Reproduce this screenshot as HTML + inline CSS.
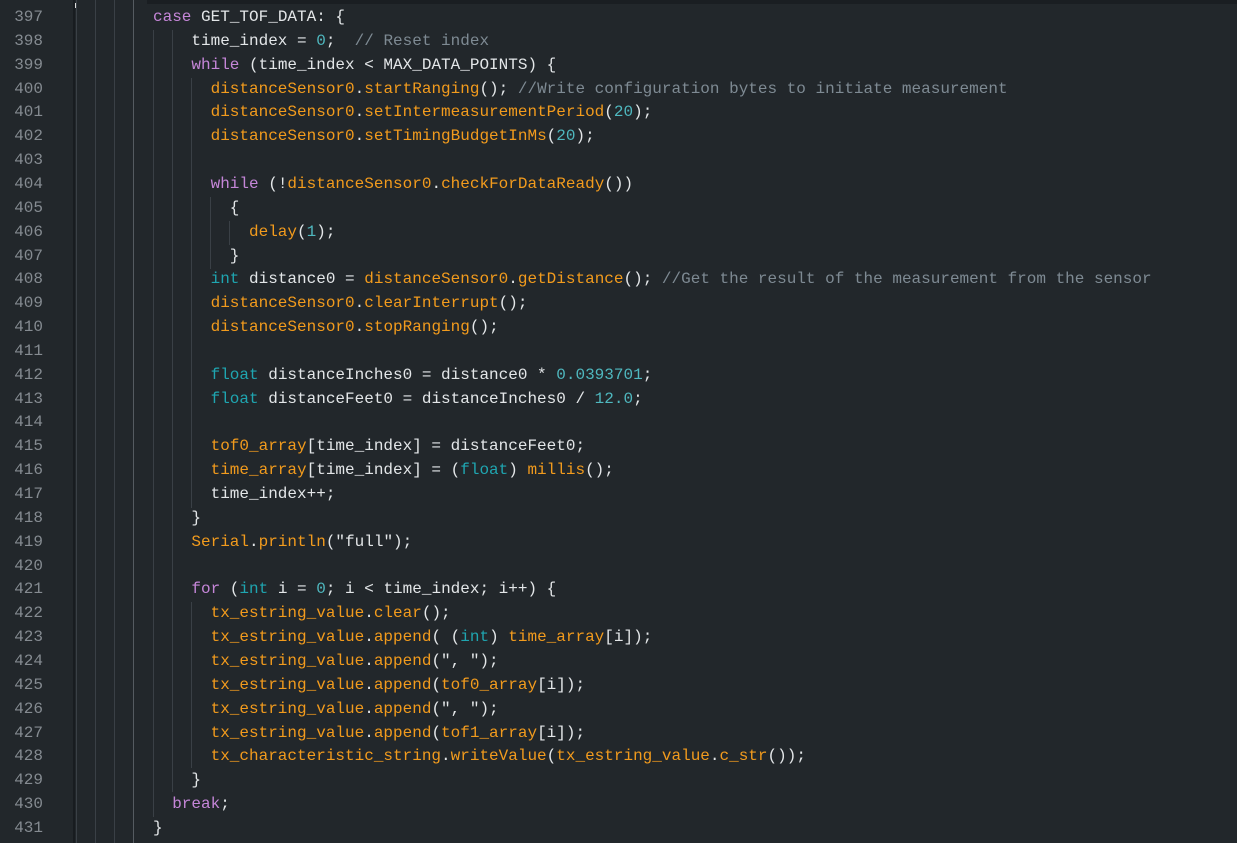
<!DOCTYPE html>
<html><head><meta charset="utf-8"><style>
body{margin:0;width:1237px;height:843px;background:#22272b;overflow:hidden;position:relative;font-family:"Liberation Mono",monospace;font-size:16px;}
.ln{position:absolute;left:0;width:43px;text-align:right;color:#858b91;height:23.85px;line-height:23.85px;}
.c{position:absolute;left:153px;color:#e3e6e8;white-space:pre;height:23.85px;line-height:23.85px;}
.g{position:absolute;width:1px;background:#3a4046;}
.k{color:#c586d8}.f{color:#f29b1d}.n{color:#4fb8bf}.t{color:#1fa5b0}.m{color:#7e8a93}
</style></head><body>
<div style="position:absolute;left:147px;top:0;width:1090px;height:4px;background:#1a1e22"></div>
<div style="position:absolute;left:73px;top:0;width:2px;height:843px;background:#181c20"></div>
<div style="position:absolute;left:75px;top:3px;width:2px;height:5px;background:#ddd"></div>
<div class="g" style="left:76px;top:0;height:843px"></div>
<div class="g" style="left:95px;top:0;height:843px"></div>
<div class="g" style="left:114px;top:0;height:843px"></div>
<div class="g" style="left:133px;top:0;height:843px;background:#555b61"></div>
<div class="g" style="left:153px;top:30px;height:787px"></div>
<div class="g" style="left:172px;top:30px;height:762px"></div>
<div class="g" style="left:191px;top:78px;height:430px"></div>
<div class="g" style="left:191px;top:602px;height:166px"></div>
<div class="g" style="left:210px;top:197px;height:72px"></div>
<div class="g" style="left:229px;top:221px;height:24px"></div>
<div id="w"></div>
<script>
var L=[
[0,'<span class="k">case</span> GET_TOF_DATA: {'],
[4,'time_index = <span class="n">0</span>;  <span class="m">// Reset index</span>'],
[4,'<span class="k">while</span> (time_index &lt; MAX_DATA_POINTS) {'],
[6,'<span class="f">distanceSensor0</span>.<span class="f">startRanging</span>(); <span class="m">//Write configuration bytes to initiate measurement</span>'],
[6,'<span class="f">distanceSensor0</span>.<span class="f">setIntermeasurementPeriod</span>(<span class="n">20</span>);'],
[6,'<span class="f">distanceSensor0</span>.<span class="f">setTimingBudgetInMs</span>(<span class="n">20</span>);'],
[0,''],
[6,'<span class="k">while</span> (!<span class="f">distanceSensor0</span>.<span class="f">checkForDataReady</span>())'],
[8,'{'],
[10,'<span class="f">delay</span>(<span class="n">1</span>);'],
[8,'}'],
[6,'<span class="t">int</span> distance0 = <span class="f">distanceSensor0</span>.<span class="f">getDistance</span>(); <span class="m">//Get the result of the measurement from the sensor</span>'],
[6,'<span class="f">distanceSensor0</span>.<span class="f">clearInterrupt</span>();'],
[6,'<span class="f">distanceSensor0</span>.<span class="f">stopRanging</span>();'],
[0,''],
[6,'<span class="t">float</span> distanceInches0 = distance0 * <span class="n">0.0393701</span>;'],
[6,'<span class="t">float</span> distanceFeet0 = distanceInches0 / <span class="n">12.0</span>;'],
[0,''],
[6,'<span class="f">tof0_array</span>[time_index] = distanceFeet0;'],
[6,'<span class="f">time_array</span>[time_index] = (<span class="t">float</span>) <span class="f">millis</span>();'],
[6,'time_index++;'],
[4,'}'],
[4,'<span class="f">Serial</span>.<span class="f">println</span>("full");'],
[0,''],
[4,'<span class="k">for</span> (<span class="t">int</span> i = <span class="n">0</span>; i &lt; time_index; i++) {'],
[6,'<span class="f">tx_estring_value</span>.<span class="f">clear</span>();'],
[6,'<span class="f">tx_estring_value</span>.<span class="f">append</span>( (<span class="t">int</span>) <span class="f">time_array</span>[i]);'],
[6,'<span class="f">tx_estring_value</span>.<span class="f">append</span>(", ");'],
[6,'<span class="f">tx_estring_value</span>.<span class="f">append</span>(<span class="f">tof0_array</span>[i]);'],
[6,'<span class="f">tx_estring_value</span>.<span class="f">append</span>(", ");'],
[6,'<span class="f">tx_estring_value</span>.<span class="f">append</span>(<span class="f">tof1_array</span>[i]);'],
[6,'<span class="f">tx_characteristic_string</span>.<span class="f">writeValue</span>(<span class="f">tx_estring_value</span>.<span class="f">c_str</span>());'],
[4,'}'],
[2,'<span class="k">break</span>;'],
[0,'}']];
var h='';
for(var i=0;i<L.length;i++){var y=(6+i*23.85).toFixed(2);
h+='<div class="ln" style="top:'+y+'px">'+(397+i)+'</div>';
h+='<div class="c" style="top:'+y+'px;left:'+(153+L[i][0]*9.6)+'px">'+L[i][1]+'</div>';}
document.getElementById('w').innerHTML=h;
</script>
</body></html>
